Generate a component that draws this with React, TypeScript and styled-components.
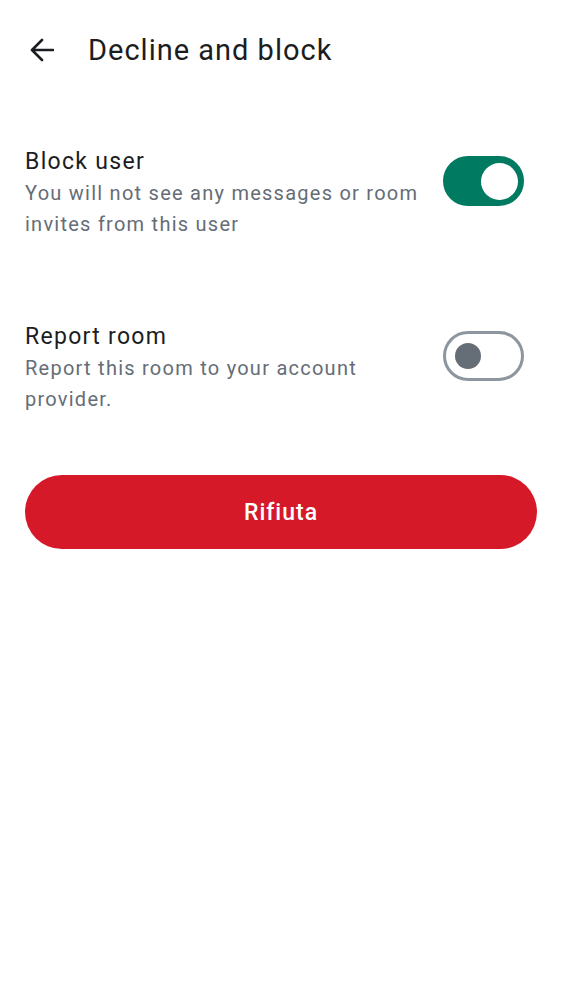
import styled, { createGlobalStyle } from "styled-components";

const GlobalStyle = createGlobalStyle`
  html, body {
    margin: 0;
    padding: 0;
    background: #ffffff;
  }
  body {
    font-family: Roboto, "Liberation Sans", sans-serif;
    -webkit-font-smoothing: antialiased;
  }
`;

const Page = styled.div`
  width: 562px;
  min-height: 1000px;
  background: #ffffff;
  display: flex;
  flex-direction: column;
`;

const TopBar = styled.header`
  height: 100px;
  display: flex;
  align-items: center;
  padding-left: 30px;
  gap: 34px;
`;

const BackButton = styled.button`
  border: none;
  background: none;
  padding: 0;
  width: 24px;
  height: 24px;
  display: flex;
  color: #1b1d22;
  cursor: pointer;
`;

const Title = styled.h1`
  margin: 0;
  font-size: 29px;
  font-weight: 400;
  color: #1b1d22;
  letter-spacing: 1px;
`;

const Content = styled.main`
  display: flex;
  flex-direction: column;
  padding: 46px 25px 0;
`;

const OptionRow = styled.div<{ $gap?: number }>`
  display: flex;
  align-items: flex-start;
  justify-content: space-between;
  gap: 20px;
  margin-bottom: ${(p) => p.$gap ?? 0}px;
`;

const OptionText = styled.div`
  display: flex;
  flex-direction: column;
  max-width: 400px;
`;

const OptionTitle = styled.div`
  font-size: 23px;
  line-height: 32px;
  color: #1b1d22;
  letter-spacing: 1.3px;
`;

const OptionDesc = styled.div`
  font-size: 20px;
  line-height: 31px;
  color: #656d77;
  letter-spacing: 1.25px;
`;

const SwitchTrack = styled.button<{ $on: boolean }>`
  flex: none;
  margin-top: 10px;
  margin-right: 13px;
  width: 81px;
  height: 50px;
  border-radius: 25px;
  box-sizing: border-box;
  padding: 0;
  display: flex;
  align-items: center;
  justify-content: ${(p) => (p.$on ? "flex-end" : "flex-start")};
  background: ${(p) => (p.$on ? "#007a61" : "#ffffff")};
  border: 3px solid ${(p) => (p.$on ? "#007a61" : "#8d959e")};
  cursor: pointer;
`;

const SwitchKnob = styled.span<{ $on: boolean }>`
  display: block;
  border-radius: 50%;
  width: ${(p) => (p.$on ? 37 : 26)}px;
  height: ${(p) => (p.$on ? 37 : 26)}px;
  margin: ${(p) => (p.$on ? "0 3px 0 0" : "0 0 0 9px")};
  background: ${(p) => (p.$on ? "#ffffff" : "#656d77")};
`;

const DeclineButton = styled.button`
  margin-top: 60px;
  width: 512px;
  height: 74px;
  border: none;
  border-radius: 37px;
  background: #d51928;
  color: #ffffff;
  font-family: Roboto, "Liberation Sans", sans-serif;
  font-size: 23px;
  font-weight: 500;
  letter-spacing: 1px;
  cursor: pointer;
`;

function Switch({ on }: { on: boolean }) {
  return (
    <SwitchTrack $on={on} role="switch" aria-checked={on}>
      <SwitchKnob $on={on} />
    </SwitchTrack>
  );
}

export default function App() {
  return (
    <Page>
      <GlobalStyle />
      <TopBar>
        <BackButton aria-label="Back">
          <svg width="24" height="24" viewBox="0 0 24 24" fill="none">
            <path
              d="M23 12H2.5M12 2L2 12L12 22"
              stroke="currentColor"
              strokeWidth="2.6"
              strokeLinecap="round"
              strokeLinejoin="round"
            />
          </svg>
        </BackButton>
        <Title>Decline and block</Title>
      </TopBar>
      <Content>
        <OptionRow $gap={81}>
          <OptionText>
            <OptionTitle>Block user</OptionTitle>
            <OptionDesc>You will not see any messages or room invites from this user</OptionDesc>
          </OptionText>
          <Switch on={true} />
        </OptionRow>
        <OptionRow>
          <OptionText>
            <OptionTitle>Report room</OptionTitle>
            <OptionDesc>Report this room to your account provider.</OptionDesc>
          </OptionText>
          <Switch on={false} />
        </OptionRow>
        <DeclineButton>Rifiuta</DeclineButton>
      </Content>
    </Page>
  );
}
